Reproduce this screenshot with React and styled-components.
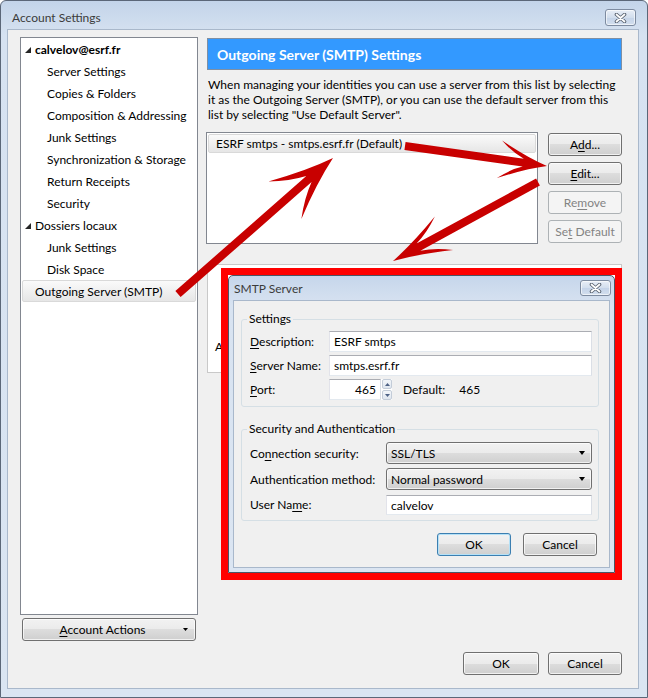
import React from "react";
import styled, { createGlobalStyle } from "styled-components";

const FONT = `Lato, "Noto Sans", "Liberation Sans", sans-serif`;

const GlobalStyle = createGlobalStyle`
  html, body { margin: 0; padding: 0; background: #fff; }
  body { font-family: ${FONT}; font-size: 12px; color: #000; }
  * { box-sizing: border-box; }
  u { text-decoration: underline; text-underline-offset: 2px; }
`;

const tree = [
  { label: "calvelov@esrf.fr", level: 0, bold: true, twisty: true },
  { label: "Server Settings", level: 1 },
  { label: "Copies & Folders", level: 1 },
  { label: "Composition & Addressing", level: 1 },
  { label: "Junk Settings", level: 1 },
  { label: "Synchronization & Storage", level: 1 },
  { label: "Return Receipts", level: 1 },
  { label: "Security", level: 1 },
  { label: "Dossiers locaux", level: 0, twisty: true },
  { label: "Junk Settings", level: 1 },
  { label: "Disk Space", level: 1 },
  { label: "Outgoing Server (SMTP)", level: 0, selected: true },
];

const details = [
  ["Description:", "ESRF smtps"],
  ["Server Name:", "smtps.esrf.fr"],
  ["Port:", "465"],
  ["User Name:", "calvelov"],
  ["Authentication method:", "Normal password"],
  ["Connection Security:", "SSL/TLS"],
];

function CloseGlyph() {
  return (
    <svg width="13" height="10" viewBox="0 0 13 10">
      <path d="M2.5 1.5 L10.5 8.5 M10.5 1.5 L2.5 8.5" stroke="#5a6472" strokeWidth="3.6" strokeLinecap="round" />
      <path d="M2.5 1.5 L10.5 8.5 M10.5 1.5 L2.5 8.5" stroke="#fff" strokeWidth="1.7" strokeLinecap="round" />
    </svg>
  );
}

function Arrow({ x1, y1, x2, y2, head, wing, t = 4 }) {
  const L = Math.hypot(x2 - x1, y2 - y1);
  const a = (Math.atan2(y2 - y1, x2 - x1) * 180) / Math.PI;
  const h = head;
  const w = wing;
  const d = `M0 ${-t} L${L - 0.5 * h} ${-t} Q${L - 0.75 * h} ${-0.45 * w} ${L - h} ${-w} Q${L - 0.45 * h} ${-0.32 * w} ${L} 0 Q${L - 0.45 * h} ${0.32 * w} ${L - h} ${w} Q${L - 0.75 * h} ${0.45 * w} ${L - 0.5 * h} ${t} L0 ${t} Z`;
  return <path d={d} transform={`translate(${x1} ${y1}) rotate(${a})`} />;
}

export default function App() {
  return (
    <>
      <GlobalStyle />
      <Window>
        <TitleBar>
          <Title>Account Settings</Title>
          <CloseButton><CloseGlyph /></CloseButton>
        </TitleBar>
        <Client>
          <LeftColumn>
            <Tree>
              {tree.map((item, i) => (
                <TreeRow key={i} $level={item.level} $twisty={item.twisty} $selected={item.selected} $bold={item.bold}>
                  {item.twisty && (
                    <Twisty>
                      <svg width="6" height="6" viewBox="0 0 6 6"><polygon points="6,0 6,6 0,6" fill="#262626" /></svg>
                    </Twisty>
                  )}
                  {item.label}
                </TreeRow>
              ))}
            </Tree>
            <MenuButton>
              <MenuLabel><u>A</u>ccount Actions</MenuLabel>
              <MenuArrow>
                <svg width="5" height="3" viewBox="0 0 5 3"><polygon points="0,0 5,0 2.5,3" fill="#000" /></svg>
              </MenuArrow>
            </MenuButton>
          </LeftColumn>

          <RightColumn>
            <Header>Outgoing Server (SMTP) Settings</Header>
            <Intro>
              <span>When managing your identities you can use a server from this list by selecting</span>
              <span>it as the Outgoing Server (SMTP), or you can use the default server from this</span>
              <span>list by selecting "Use Default Server".</span>
            </Intro>
            <ServerRow>
              <ServerList>
                <ServerItem>ESRF smtps - smtps.esrf.fr (Default)</ServerItem>
              </ServerList>
              <SideButtons>
                <Button>A<u>d</u>d...</Button>
                <Button><u>E</u>dit...</Button>
                <Button disabled>Re<u>m</u>ove</Button>
                <Button disabled>Se<u>t</u> Default</Button>
              </SideButtons>
            </ServerRow>
            <Details>
              {details.map(([k, v]) => (
                <React.Fragment key={k}>
                  <DetailLabel>{k}</DetailLabel>
                  <span>{v}</span>
                </React.Fragment>
              ))}
            </Details>
            <Footer>
              <Button $w={76}>OK</Button>
              <Button>Cancel</Button>
            </Footer>
          </RightColumn>
        </Client>

        <Highlight>
          <Dialog>
            <DialogTitle>
              <Title>SMTP Server</Title>
              <CloseButton $h={16}><CloseGlyph /></CloseButton>
            </DialogTitle>
            <DialogClient>
              <Group>
                <Legend>Settings</Legend>
                <FormGrid $label={79} $gap={3}>
                  <FieldLabel><u>D</u>escription:</FieldLabel>
                  <TextInput readOnly value="ESRF smtps" />
                  <FieldLabel><u>S</u>erver Name:</FieldLabel>
                  <TextInput readOnly value="smtps.esrf.fr" />
                  <FieldLabel><u>P</u>ort:</FieldLabel>
                  <PortLine>
                    <TextInput readOnly value="465" $w={52} $right />
                    <Spinner>
                      <SpinHalf>
                        <svg width="5" height="3" viewBox="0 0 5 3"><polygon points="0,3 5,3 2.5,0" fill="#4d6185" /></svg>
                      </SpinHalf>
                      <SpinHalf>
                        <svg width="5" height="3" viewBox="0 0 5 3"><polygon points="0,0 5,0 2.5,3" fill="#4d6185" /></svg>
                      </SpinHalf>
                    </Spinner>
                    <PortDefault>Default:</PortDefault>
                    <span>465</span>
                  </PortLine>
                </FormGrid>
              </Group>
              <Group $top={14}>
                <Legend>Security and Authentication</Legend>
                <FormGrid $label={136} $gap={4}>
                  <FieldLabel>Co<u>n</u>nection security:</FieldLabel>
                  <Combo>
                    SSL/TLS
                    <ComboArrow />
                  </Combo>
                  <FieldLabel>Authent<u>i</u>cation method:</FieldLabel>
                  <Combo>
                    Normal password
                    <ComboArrow />
                  </Combo>
                  <FieldLabel>User Na<u>m</u>e:</FieldLabel>
                  <TextInput readOnly value="calvelov" $h={20} $mt={1} />
                </FormGrid>
              </Group>
              <DialogButtons>
                <Button $focus>OK</Button>
                <Button>Cancel</Button>
              </DialogButtons>
            </DialogClient>
          </Dialog>
        </Highlight>

        <Arrows width="648" height="698" viewBox="0 0 648 698" fill="#c80000">
          <Arrow x1={178} y1={294} x2={333} y2={158} head={64} wing={25} />
          <Arrow x1={405} y1={146} x2={547} y2={166} head={48} wing={19} />
          <Arrow x1={538} y1={182} x2={393} y2={261} head={58} wing={19} />
        </Arrows>
      </Window>
    </>
  );
}

const Window = styled.div`
  position: relative;
  width: 648px;
  height: 698px;
  border: 1px solid #5b6778;
  border-radius: 6px 6px 0 0;
  background: linear-gradient(#c3d4e9, #d6e2f1 34px, #dae5f2);
  display: flex;
  flex-direction: column;
  overflow: hidden;
`;

const TitleBar = styled.div`
  height: 28px;
  padding: 5px 11px 0 11px;
  display: flex;
  align-items: center;
  justify-content: space-between;
`;

const Title = styled.div`
  font-size: 12px;
  color: #3b3b3b;
`;

const CloseButton = styled.div`
  width: 31px;
  height: ${(p) => p.$h || 17}px;
  border: 1px solid #7d8ba0;
  border-radius: 3px;
  background: linear-gradient(#e8eef7, #d2deed 50%, #c4d3e8 51%, #d3dfee);
  box-shadow: inset 0 0 0 1px rgba(255, 255, 255, 0.6);
  display: flex;
  align-items: center;
  justify-content: center;
`;

const Client = styled.div`
  flex: 1;
  margin: 0 8px 8px 6px;
  border: 1px solid #a9b8cb;
  background: #f0f0f0;
  padding: 7px 16px 13px 12px;
  display: flex;
  gap: 9px;
`;

const LeftColumn = styled.div`
  width: 178px;
  display: flex;
  flex-direction: column;
  gap: 3px;
`;

const Tree = styled.div`
  height: 578px;
  background: #fff;
  border: 1px solid #828790;
`;

const TreeRow = styled.div`
  height: 22px;
  margin: 0 1px;
  display: flex;
  align-items: center;
  white-space: nowrap;
  font-weight: ${(p) => (p.$bold ? 700 : 400)};
  padding-left: ${(p) => (p.$level ? 24 : p.$twisty ? 2 : 12)}px;
  border: 1px solid ${(p) => (p.$selected ? "#d9d9d9" : "transparent")};
  border-radius: 2px;
  background: ${(p) => (p.$selected ? "linear-gradient(#fafafa, #e6e6e6)" : "none")};
`;

const Twisty = styled.span`
  width: 10px;
  display: flex;
  padding-top: 2px;
`;

const MenuButton = styled.div`
  height: 23px;
  margin: 0 2px;
  border: 1px solid #707070;
  border-radius: 3px;
  background: linear-gradient(#f2f2f2 0%, #ebebeb 50%, #dddddd 50%, #cfcfcf 100%);
  box-shadow: inset 0 0 0 1px rgba(255, 255, 255, 0.7);
  display: flex;
  align-items: center;
`;

const MenuLabel = styled.span`
  flex: 1;
  text-align: center;
`;

const MenuArrow = styled.span`
  width: 13px;
  display: flex;
  padding-left: 1px;
`;

const RightColumn = styled.div`
  flex: 1;
  display: flex;
  flex-direction: column;
`;

const Header = styled.div`
  margin-top: 1px;
  height: 32px;
  background: #3399ff;
  border: 1px solid #7f8fa3;
  color: #fff;
  font-weight: 700;
  font-size: 14px;
  padding-left: 9px;
  display: flex;
  align-items: center;
`;

const Intro = styled.div`
  margin: 7px 0 0 1px;
  line-height: 15px;
  display: flex;
  flex-direction: column;
  white-space: nowrap;
`;

const ServerRow = styled.div`
  margin-top: 10px;
  margin-left: -1px;
  display: flex;
  gap: 10px;
`;

const ServerList = styled.div`
  width: 332px;
  height: 112px;
  background: #fff;
  border: 1px solid #828790;
  padding: 1px;
`;

const ServerItem = styled.div`
  height: 19px;
  border: 1px solid #d9d9d9;
  border-radius: 2px;
  background: linear-gradient(#fafafa, #e6e6e6);
  padding-left: 7px;
  display: flex;
  align-items: center;
`;

const SideButtons = styled.div`
  margin-top: 1px;
  display: flex;
  flex-direction: column;
  gap: 6px;
`;

const Button = styled.button`
  height: 23px;
  width: ${(p) => p.$w || 74}px;
  padding: 0;
  font-family: ${FONT};
  font-size: 12px;
  color: #000;
  border: 1px solid ${(p) => (p.$focus ? "#3c7fb1" : "#707070")};
  border-radius: 3px;
  background: linear-gradient(#f2f2f2 0%, #ebebeb 50%, #dddddd 50%, #cfcfcf 100%);
  box-shadow: inset 0 0 0 1px ${(p) => (p.$focus ? "#b5e1f7" : "rgba(255, 255, 255, 0.7)")};

  &:disabled {
    color: #838383;
    border-color: #adb2b5;
    background: #f4f4f4;
    box-shadow: none;
  }
`;

const Details = styled.div`
  margin-top: 20px;
  height: 109px;
  background: #fff;
  border: 1px solid #c9c9c9;
  padding-left: 7px;
  display: grid;
  grid-template-columns: max-content 1fr;
  grid-auto-rows: 18px;
  column-gap: 6px;
  align-items: center;
`;

const DetailLabel = styled.span`
  text-align: right;
  white-space: nowrap;
`;

const Footer = styled.div`
  margin-top: auto;
  display: flex;
  justify-content: flex-end;
  gap: 9px;
`;

const Highlight = styled.div`
  position: absolute;
  left: 220px;
  top: 267px;
  width: 401px;
  height: 312px;
  border: 7px solid #ff0000;
`;

const Dialog = styled.div`
  height: 100%;
  border: 1px solid #4a5566;
  border-radius: 5px 5px 0 0;
  background: linear-gradient(#c6d6eb, #d8e3f1 30px, #dbe5f2);
  display: flex;
  flex-direction: column;
`;

const DialogTitle = styled.div`
  height: 24px;
  padding: 0 3px 0 5px;
  display: flex;
  align-items: center;
  justify-content: space-between;
`;

const DialogClient = styled.div`
  flex: 1;
  margin: 0 4px 4px 4px;
  border: 1px solid #a9b8cb;
  background: #f0f0f0;
  padding: 10px 10px 0 7px;
`;

const Group = styled.fieldset`
  margin: ${(p) => p.$top || 0}px 0 0 0;
  padding: ${(p) => (p.$top ? 5 : 4)}px 6px ${(p) => (p.$top ? 5 : 6)}px 8px;
  border: 1px solid #d5dfe5;
  border-radius: 3px;
  min-width: 0;
`;

const Legend = styled.legend`
  padding: 0 2px;
  margin-left: -3px;
  font-size: 12px;
  line-height: 16px;
  color: #000;
`;

const FormGrid = styled.div`
  display: grid;
  grid-template-columns: ${(p) => p.$label}px 1fr;
  row-gap: ${(p) => p.$gap}px;
  align-items: center;
`;

const FieldLabel = styled.span`
  white-space: nowrap;
`;

const TextInput = styled.input`
  width: ${(p) => (p.$w ? `${p.$w}px` : "100%")};
  height: ${(p) => p.$h || 21}px;
  margin-top: ${(p) => p.$mt || 0}px;
  border: 1px solid;
  border-color: #abadb3 #dbdfe6 #e3e9ef #e2e3ea;
  background: #fff;
  font-family: ${FONT};
  font-size: 12px;
  color: #000;
  padding: 0 ${(p) => (p.$right ? 4 : 3)}px 0 4px;
  text-align: ${(p) => (p.$right ? "right" : "left")};
  outline: none;
`;

const PortLine = styled.div`
  display: flex;
  align-items: center;
`;

const Spinner = styled.div`
  width: 11px;
  height: 21px;
  display: flex;
  flex-direction: column;
  gap: 1px;
  background: #fff;
  padding: 0 0 0 1px;
`;

const SpinHalf = styled.div`
  flex: 1;
  border: 1px solid #c3ccd8;
  border-radius: 2px;
  background: linear-gradient(#f3f6fa, #dfe6ef);
  display: flex;
  align-items: center;
  justify-content: center;
`;

const PortDefault = styled.span`
  margin: 0 14px 0 11px;
`;

const Combo = styled.div`
  height: 22px;
  border: 1px solid #707070;
  border-radius: 3px;
  background: linear-gradient(#f2f2f2 0%, #ebebeb 50%, #dddddd 50%, #cfcfcf 100%);
  box-shadow: inset 0 0 0 1px rgba(255, 255, 255, 0.7);
  padding: 0 5px 0 4px;
  display: flex;
  align-items: center;
  justify-content: space-between;
`;

const ComboArrow = styled.span`
  width: 0;
  height: 0;
  border-left: 3.5px solid transparent;
  border-right: 3.5px solid transparent;
  border-top: 4px solid #000;
  margin-right: 1px;
`;

const DialogButtons = styled.div`
  margin-top: 12px;
  padding-right: 2px;
  display: flex;
  justify-content: flex-end;
  gap: 12px;
`;

const Arrows = styled.svg`
  position: absolute;
  left: -1px;
  top: -1px;
  pointer-events: none;
`;
